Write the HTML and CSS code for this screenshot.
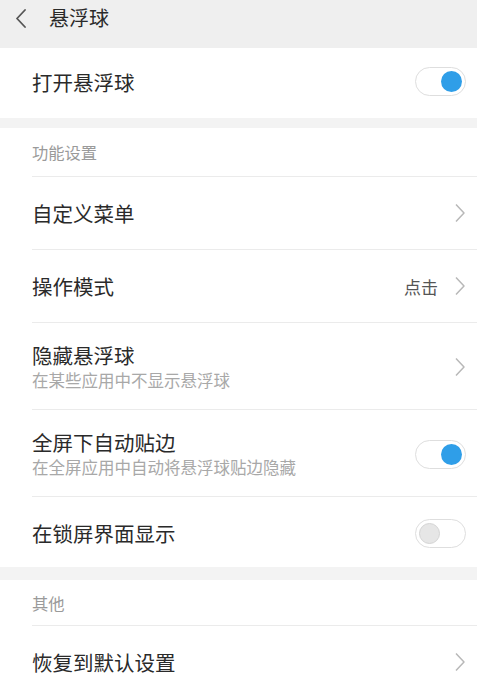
FILE: index.html
```html
<!DOCTYPE html>
<html lang="zh-CN">
<head>
<meta charset="utf-8">
<title>悬浮球</title>
<link rel="stylesheet" href="styles.css">
</head>
<body>
<div class="page">
  <header class="header">
    <svg class="back" width="12" height="19" viewBox="0 0 12 19"><polyline points="10,1 2,9.5 10,18" fill="none" stroke="#555" stroke-width="1.8" stroke-linejoin="round" stroke-linecap="round"/></svg>
    <span class="header-title">悬浮球</span>
  </header>

  <section class="group">
    <div class="row row-first">
      <div class="row-inner">
        <div class="row-text"><div class="title">打开悬浮球</div></div>
        <div class="toggle on"><span class="knob"></span></div>
      </div>
    </div>
  </section>

  <div class="gap gap-a"></div>

  <section class="group">
    <div class="section-title">功能设置</div>
    <div class="row row-h73">
      <div class="row-inner">
        <div class="row-text"><div class="title">自定义菜单</div></div>
        <svg class="chev" width="12" height="20" viewBox="0 0 12 20"><polyline points="2,1.5 10,10 2,18.5" fill="none" stroke="#b8b8b8" stroke-width="1.5" stroke-linejoin="round"/></svg>
      </div>
    </div>
    <div class="row row-h73">
      <div class="row-inner">
        <div class="row-text"><div class="title">操作模式</div></div>
        <span class="value">点击</span>
        <svg class="chev" width="12" height="20" viewBox="0 0 12 20"><polyline points="2,1.5 10,10 2,18.5" fill="none" stroke="#b8b8b8" stroke-width="1.5" stroke-linejoin="round"/></svg>
      </div>
    </div>
    <div class="row row-h87">
      <div class="row-inner">
        <div class="row-text">
          <div class="title">隐藏悬浮球</div>
          <div class="subtitle">在某些应用中不显示悬浮球</div>
        </div>
        <svg class="chev" width="12" height="20" viewBox="0 0 12 20"><polyline points="2,1.5 10,10 2,18.5" fill="none" stroke="#b8b8b8" stroke-width="1.5" stroke-linejoin="round"/></svg>
      </div>
    </div>
    <div class="row row-h87">
      <div class="row-inner">
        <div class="row-text">
          <div class="title">全屏下自动贴边</div>
          <div class="subtitle">在全屏应用中自动将悬浮球贴边隐藏</div>
        </div>
        <div class="toggle on"><span class="knob"></span></div>
      </div>
    </div>
    <div class="row row-h71">
      <div class="row-inner">
        <div class="row-text"><div class="title">在锁屏界面显示</div></div>
        <div class="toggle off"><span class="knob"></span></div>
      </div>
    </div>
  </section>

  <div class="gap gap-b"></div>

  <section class="group">
    <div class="section-title section-title-b">其他</div>
    <div class="row row-h73">
      <div class="row-inner">
        <div class="row-text"><div class="title">恢复到默认设置</div></div>
        <svg class="chev" width="12" height="20" viewBox="0 0 12 20"><polyline points="2,1.5 10,10 2,18.5" fill="none" stroke="#b8b8b8" stroke-width="1.5" stroke-linejoin="round"/></svg>
      </div>
    </div>
  </section>
</div>
</body>
</html>
```

FILE: styles.css
```css
* { box-sizing: border-box; }

html, body {
  margin: 0;
  padding: 0;
  background: #ffffff;
}

body {
  font-family: "Noto Sans CJK SC", "Noto Sans", sans-serif;
  color: #2a2a2a;
  width: 477px;
  height: 694px;
  overflow: hidden;
}

.page {
  display: flex;
  flex-direction: column;
}

.header {
  height: 48px;
  background: #efefef;
  display: flex;
  align-items: flex-start;
  padding: 4px 0 0 15px;
  gap: 22px;
}

.back {
  margin-top: 5px;
}

.header-title {
  font-size: 20px;
  line-height: 28px;
  color: #2a2a2a;
}

.group {
  background: #ffffff;
  display: flex;
  flex-direction: column;
}

.gap {
  background: #f3f3f3;
}
.gap-a { height: 10px; }
.gap-b { height: 13px; }

.section-title {
  height: 48px;
  padding-left: 32px;
  display: flex;
  align-items: center;
  font-size: 16.3px;
  color: #9a9a9a;
}
.section-title-b {
  height: 45px;
}

.row {
  padding-left: 32px;
  display: flex;
}

.row-inner {
  flex: 1;
  display: flex;
  align-items: center;
  border-top: 1px solid #ebebeb;
  padding-right: 11px;
}

.row-first .row-inner {
  border-top: none;
  height: 70px;
  padding-bottom: 3px;
}

.row-h73 .row-inner { height: 73px; }
.row-h87 .row-inner { height: 87px; padding-top: 2px; }
.row-h71 .row-inner { height: 71px; padding-top: 2px; }

.row-text {
  flex: 1;
  display: flex;
  flex-direction: column;
}

.title {
  font-size: 20.5px;
  line-height: 26px;
  color: #2a2a2a;
}

.subtitle {
  font-size: 16.5px;
  line-height: 24px;
  color: #a8a8a8;
}

.value {
  font-size: 17px;
  color: #555555;
  margin-right: 16px;
}

.chev {
  flex: none;
}

.toggle {
  flex: none;
  width: 51px;
  height: 29px;
  border-radius: 15px;
  border: 1px solid #dedede;
  background: #ffffff;
  display: flex;
  align-items: center;
  padding: 0 3px;
}

.toggle.on { justify-content: flex-end; }
.toggle.off { justify-content: flex-start; }

.knob {
  width: 21px;
  height: 21px;
  border-radius: 50%;
}

.toggle.on .knob {
  background: #2f9ee8;
}

.toggle.off .knob {
  background: #e6e6e6;
  border: 1px solid #d4d4d4;
}
```
